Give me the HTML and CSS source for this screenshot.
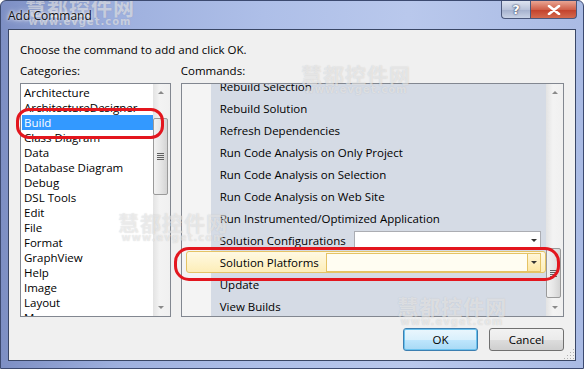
FILE: index.html
```html
<!DOCTYPE html>
<html lang="en">
<head>
  <meta charset="UTF-8">
  <title>Add Command</title>
  <link rel="stylesheet" href="styles.css">
</head>
<body>
  <div class="window">
    <div class="titlebar">
      <span class="title">Add Command</span>
      <div class="caption-btns">
        <span class="btn-help">?</span>
        <span class="btn-close">
          <svg width="14" height="10" viewBox="0 0 14 10"><path d="M2 1 L12 9 M12 1 L2 9" stroke="#fff" stroke-width="2.6" stroke-linecap="round"/></svg>
        </span>
      </div>
    </div>

    <div class="client">
      <p class="intro">Choose the command to add and click OK.</p>

      <div class="columns">
        <div class="col col-cat">
          <div class="label">Categories:</div>
          <div class="listbox">
            <ul class="cat-list">
              <li>Architecture</li>
              <li>ArchitectureDesigner</li>
              <li class="selected">Build</li>
              <li>Class Diagram</li>
              <li>Data</li>
              <li>Database Diagram</li>
              <li>Debug</li>
              <li>DSL Tools</li>
              <li>Edit</li>
              <li>File</li>
              <li>Format</li>
              <li>GraphView</li>
              <li>Help</li>
              <li>Image</li>
              <li>Layout</li>
              <li>Macros</li>
            </ul>
            <div class="vscroll">
              <span class="arrow up"></span>
              <div class="track"><div class="thumb cat-thumb"><span class="grip"></span></div></div>
              <span class="arrow down"></span>
            </div>
          </div>
        </div>

        <div class="col col-cmd">
          <div class="label">Commands:</div>
          <div class="listbox">
            <div class="cmd-view">
              <ul class="cmd-list">
                <li>Rebuild Selection</li>
                <li>Rebuild Solution</li>
                <li>Refresh Dependencies</li>
                <li>Run Code Analysis on Only Project</li>
                <li>Run Code Analysis on Selection</li>
                <li>Run Code Analysis on Web Site</li>
                <li>Run Instrumented/Optimized Application</li>
                <li>Solution Configurations <span class="combo"><span class="combo-arrow"></span></span></li>
                <li class="hot">Solution Platforms <span class="combo combo-hot"><span class="combo-arrow"></span></span></li>
                <li>Update</li>
                <li>View Builds</li>
              </ul>
            </div>
            <div class="vscroll">
              <span class="arrow up"></span>
              <div class="track"><div class="thumb cmd-thumb"><span class="grip"></span></div></div>
              <span class="arrow down"></span>
            </div>
          </div>
        </div>
      </div>

      <div class="buttons">
        <button class="btn btn-default">OK</button>
        <button class="btn">Cancel</button>
      </div>
      <span class="size-grip"></span>
    </div>

    <!-- annotations -->
    <span class="mark mark-build"></span>
    <span class="mark mark-platforms"></span>

    <!-- watermarks -->
    <div class="wm wm-1">慧都控件网<small>www.evget.com</small></div>
    <div class="wm wm-2">慧都控件网<small>www.evget.com</small></div>
    <div class="wm wm-3">慧都控件网<small>www.evget.com</small></div>
    <div class="wm wm-4">慧都控件网<small>www.evget.com</small></div>
  </div>
</body>
</html>
```

FILE: styles.css
```css
body {
  margin: 0;
  background: #ffffff;
  font-family: "Open Sans", "Noto Sans", sans-serif;
  font-size: 11.5px;
  color: #000;
}

.window {
  position: relative;
  width: 584px;
  height: 369px;
  box-sizing: border-box;
  display: flex;
  flex-direction: column;
  overflow: hidden;
  background: linear-gradient(to right, #7d8fc4 0%, #9eb0de 20%, #aebfe8 45%, #b9c8ec 70%, #aabbe4 100%);
  border: 1px solid #3c4a70;
  border-radius: 6px 6px 0 0;
}

.titlebar {
  position: relative;
  z-index: 2;
  height: 28px;
  display: flex;
  align-items: flex-start;
  justify-content: space-between;
  flex-shrink: 0;
}

.title {
  margin: 6px 0 0 7px;
  font-size: 12px;
  color: #111;
  text-shadow: 0 0 6px #fff, 0 0 3px #fff;
}

.caption-btns {
  display: flex;
  margin-right: 6px;
}

.btn-help, .btn-close {
  height: 18px;
  border: 1px solid #4b587c;
  border-top: none;
  display: flex;
  align-items: center;
  justify-content: center;
  box-sizing: border-box;
}

.btn-help {
  width: 29px;
  border-radius: 0 0 0 4px;
  border-right: none;
  background: linear-gradient(#dde3f0, #b9c3da 50%, #a3afcc 51%, #c8d2e6);
  color: #fff;
  font-family: "DejaVu Sans", sans-serif;
  font-weight: bold;
  font-size: 13px;
  text-shadow: 0 0 2px #2c3656, 0 0 1px #2c3656;
}

.btn-close {
  width: 47px;
  border-radius: 0 0 4px 0;
  background: linear-gradient(#e9a593, #d0604a 50%, #c2402a 51%, #d46a4e);
}

.client {
  position: relative;
  flex: 1;
  margin: 0 7px 7px 7px;
  background: #f0f0f0;
  border: 1px solid #3a4766;
  padding: 11px 11px 7px 11px;
  display: flex;
  flex-direction: column;
}

.intro {
  margin: 0;
  line-height: 18px;
}

.columns {
  display: flex;
  gap: 10px;
  margin-top: 4px;
}

.label {
  line-height: 16px;
  margin-bottom: 4px;
}

.col-cat { width: 151px; }
.col-cmd { width: 384px; }

.listbox {
  height: 234px;
  box-sizing: border-box;
  border: 1px solid #828790;
  background: #fff;
  display: flex;
  overflow: hidden;
}

.cat-list {
  flex: 1;
  list-style: none;
  margin: 1px 0 0 1px;
  padding: 0;
  overflow: hidden;
}

.cat-list li {
  height: 15px;
  line-height: 15px;
  padding-left: 2px;
  white-space: nowrap;
}

.cat-list li.selected {
  background: #3399ff;
  color: #fff;
}

.vscroll {
  width: 17px;
  flex-shrink: 0;
  display: flex;
  flex-direction: column;
  background: linear-gradient(to right, #e3e3e3, #f3f3f3 40%, #f0f0f0);
}

.arrow {
  height: 17px;
  display: flex;
  align-items: center;
  justify-content: center;
}

.arrow::before {
  content: "";
  border-left: 3px solid transparent;
  border-right: 3px solid transparent;
}

.arrow.up::before { border-bottom: 3px solid #8a8a8a; }
.arrow.down::before { border-top: 3px solid #8a8a8a; }

.track {
  flex: 1;
}

.thumb {
  width: 15px;
  box-sizing: border-box;
  border: 1px solid #9a9a9a;
  border-radius: 2px;
  background: linear-gradient(to right, #f2f2f2, #e6e6e6 50%, #d4d4d4);
  display: flex;
  align-items: center;
  justify-content: center;
}

.cat-thumb { margin-top: 17px; height: 77px; }
.cmd-thumb { margin-top: 147px; height: 50px; }

.grip {
  width: 7px;
  height: 7px;
  background: repeating-linear-gradient(#606060 0 1px, transparent 1px 2px);
}

.cmd-view {
  flex: 1;
  overflow: hidden;
  background: linear-gradient(to right, #f4f4f4 29px, #d5dbe5 29px);
}

.cmd-list {
  list-style: none;
  margin: -9px 0 0 0;
  padding: 0;
}

.cmd-list li {
  height: 22px;
  display: flex;
  align-items: center;
  padding-left: 38px;
  padding-right: 5px;
  white-space: nowrap;
}

.cmd-list li.hot {
  margin-left: 4px;
  padding-left: 33px;
  border: 1px solid #e5c365;
  border-radius: 3px;
  box-sizing: border-box;
  background: linear-gradient(#fff9e3, #fdeeb8);
  padding-right: 4px;
}

.combo {
  flex: 1;
  height: 18px;
  margin-left: 8px;
  box-sizing: border-box;
  border: 1px solid #abadb3;
  background: #fff;
  display: flex;
  justify-content: flex-end;
}

.combo-arrow {
  width: 12px;
  display: flex;
  align-items: center;
  justify-content: center;
}

.combo-arrow::before {
  content: "";
  border-left: 3px solid transparent;
  border-right: 3px solid transparent;
  border-top: 3px solid #333;
}

.combo-hot {
  height: 19px;
  margin-left: 7px;
  border-color: #e5c365;
  background: #fffdf2;
}

.combo-hot .combo-arrow {
  border-left: 1px solid #e5c365;
  background: linear-gradient(#fff6d8, #fde7a4);
}

.buttons {
  display: flex;
  justify-content: flex-end;
  gap: 11px;
  margin-top: 11px;
}

.btn {
  width: 75px;
  height: 23px;
  border: 1px solid #707070;
  border-radius: 3px;
  background: linear-gradient(#f2f2f2, #ebebeb 50%, #dddddd 51%, #cfcfcf);
  font-family: inherit;
  font-size: 11.5px;
  color: #000;
  padding: 0;
}

.btn-default {
  border-color: #3c7fb1;
  background: linear-gradient(#eaf6fd, #d9f0fc 50%, #bee6fd 51%, #a7d9f5);
  box-shadow: inset 0 0 0 1px #6ac2ee;
}

.size-grip {
  position: absolute;
  right: 1px;
  bottom: 1px;
  width: 11px;
  height: 11px;
  background: radial-gradient(circle, #b0b0b0 0.8px, transparent 1px) 0 0 / 3px 3px;
  clip-path: polygon(100% 0, 100% 100%, 0 100%);
}

.mark {
  position: absolute;
  border: 3px solid #e3161e;
  box-sizing: border-box;
}

.mark-build {
  left: 15px;
  top: 107px;
  width: 148px;
  height: 31px;
  border-radius: 13px;
}

.mark-platforms {
  left: 173px;
  top: 246px;
  width: 386px;
  height: 34px;
  border-radius: 15px;
}

.wm {
  position: absolute;
  z-index: 1;
  font-family: "Noto Sans CJK SC", sans-serif;
  font-weight: bold;
  font-size: 21px;
  letter-spacing: 1px;
  line-height: 22px;
  color: rgba(255, 255, 255, 0.5);
  text-shadow: 0 0 1px rgba(110, 110, 110, 0.3);
  pointer-events: none;
  display: flex;
  flex-direction: column;
  align-items: center;
}

.wm small {
  font-family: "DejaVu Sans", sans-serif;
  font-size: 10px;
  line-height: 10px;
  letter-spacing: 1px;
}

.wm-1 { left: 24px; top: -6px; }
.wm-2 { left: 300px; top: 62px; }
.wm-3 { left: 117px; top: 210px; }
.wm-4 { left: 396px; top: 294px; }
```
